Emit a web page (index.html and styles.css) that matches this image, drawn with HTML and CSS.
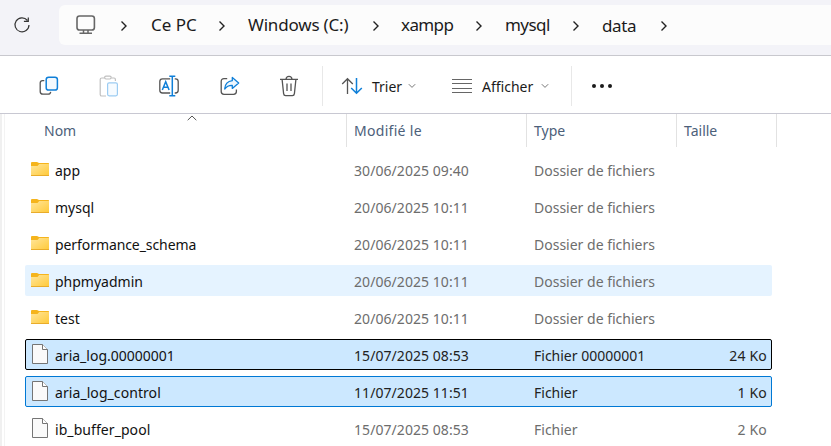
FILE: index.html
```html
<!DOCTYPE html>
<html lang="fr">
<head>
<meta charset="utf-8">
<title>data</title>
<link rel="stylesheet" href="styles.css">
</head>
<body>
<svg class="defs" width="0" height="0">
  <defs>
    <linearGradient id="gold" x1="0" y1="0" x2="1" y2="1"><stop offset="0" stop-color="#ffe69c"/><stop offset="1" stop-color="#ffc937"/></linearGradient>
    <symbol id="chev" viewBox="0 0 8 12"><path d="M1.5 1.5 6 6 1.5 10.5" fill="none" stroke="#222" stroke-width="1.4"/></symbol>
    <symbol id="down" viewBox="0 0 8 6"><path d="M.8 1.2 4 4.4 7.2 1.2" fill="none" stroke="#777" stroke-width="1"/></symbol>
    <symbol id="folder" viewBox="0 0 18 14"><path d="M0 1Q0 0 1 0H6L8 1H17.5Q18 1 18 2V6H0Z" fill="#f5b41c"/><path d="M0 4H6.5L8.2 2H18V14H0Z" fill="url(#gold)"/><path d="M0 13.5H18" stroke="#e9ac2a"/></symbol>
    <symbol id="file" viewBox="0 0 17 20"><path d="M1.5.5H11.5L16.5 5.5V19.5H1.5Z" fill="#fafafa" stroke="#757575"/><path d="M11.5.5V5.5H16.5" fill="#fff" stroke="#757575"/></symbol>
  </defs>
</svg>
<div class="window">
  <header class="nav">
    <svg class="refresh" width="18" height="18" viewBox="0 0 18 18"><path d="M14.4 4.4A7 7 0 1 0 16 9M15.3 1.6V5.4H10.9" fill="none" stroke="#333" stroke-width="1.2"/></svg>
    <nav class="address">
      <svg class="pc" width="20" height="20" viewBox="0 0 20 20"><rect x="1" y="1" width="17.4" height="14" rx="2.6" fill="none" stroke="#666" stroke-width="1.6"/><path d="M7.5 15V18M12 15V18M3.5 18.3H16" fill="none" stroke="#666" stroke-width="1.5"/></svg>
      <svg class="chev"><use href="#chev"/></svg><span class="cepc">Ce PC</span>
      <svg class="chev"><use href="#chev"/></svg><span class="drive">Windows (C:)</span>
      <svg class="chev"><use href="#chev"/></svg><span class="xampp">xampp</span>
      <svg class="chev"><use href="#chev"/></svg><span class="mysql">mysql</span>
      <svg class="chev"><use href="#chev"/></svg><span class="data">data</span>
      <svg class="chev"><use href="#chev"/></svg>
    </nav>
  </header>
  <div class="toolbar">
    <div class="tools">
      <svg width="20" height="20" viewBox="0 0 20 20" fill="none" stroke-width="1.3"><path d="M5.3 4.6H3.5Q1.2 4.6 1.2 7V15.5Q1.2 18.2 4 18.2H9Q11.3 18.2 11.7 15.8" stroke="#555"/><rect x="7.2" y="1.2" width="11.2" height="12.9" rx="2.4" fill="#f3f9fe" stroke="#0f7fd8" stroke-width="1.5"/></svg>
      <svg width="20" height="22" viewBox="0 0 20 22" fill="none" stroke-width="1.2"><path d="M5.5 3H2.8Q1.2 3 1.2 4.6V19.4Q1.2 21 2.8 21H7M12.5 3H15Q16.4 3 16.4 4.6V6" stroke="#c0c0c0"/><rect x="5.6" y="1.2" width="6.6" height="2.8" rx="1.4" stroke="#c0c0c0"/><rect x="8.6" y="7.8" width="9.8" height="13" rx="1.5" fill="#f6fbff" stroke="#9cccf2"/></svg>
      <svg width="22" height="22" viewBox="0 0 22 22" fill="none" stroke-width="1.3"><path d="M12.2 3.8H4.5Q1.8 3.8 1.8 6.5V15.3Q1.8 18 4.5 18H12.2M16.7 3.8H17.5Q20.2 3.8 20.2 6.5V15.3Q20.2 18 17.5 18H16.7" stroke="#555"/><path d="M4.3 15 7.7 6.7 11.1 15M5.5 12.2H9.9M14.3 1.5V20.5M11.3 1.2H17.3M11.3 20.8H17.3" stroke="#0f7fd8" stroke-width="1.5"/></svg>
      <svg width="20" height="20" viewBox="0 0 20 20" fill="none" stroke-width="1.3"><path d="M7.2 2.7H4Q1.2 2.7 1.2 5.5V15.5Q1.2 18.3 4 18.3H13.5Q16.4 18.3 16.4 15.5V13.5" stroke="#555"/><path d="M12.3 1.5 18.7 7 12.3 12.4V9.4Q7.5 9.2 4.7 13 5.2 5.5 12.3 4.7Z" fill="#eef7fe" stroke="#0f7fd8" stroke-linejoin="round"/></svg>
      <svg width="20" height="22" viewBox="0 0 20 22" fill="none" stroke="#555" stroke-width="1.3"><path d="M1 4.3H19M7 4.2Q7.2 1.3 10 1.3T13 4.2M3.1 4.5 4.6 18.6Q4.8 20.6 6.6 20.6H13.4Q15.2 20.6 15.4 18.6L16.9 4.5M8 8.5V16M12 8.5V16"/></svg>
    </div>
    <div class="menus">
      <svg width="22" height="18" viewBox="0 0 22 18" fill="none" stroke-width="1.3"><path d="M6.5 17V1.5M1.2 7 6.5 1.7 11.8 7" stroke="#555"/><path d="M15.5 1V16.5M10.2 11 15.5 16.3 20.8 11" stroke="#0f7fd8" stroke-width="1.5"/></svg>
      <span class="trier">Trier</span><svg class="down"><use href="#down"/></svg>
      <svg class="lines" width="20" height="14" viewBox="0 0 20 14" stroke="#666"><path d="M0 .5H20M0 4.5H20M0 9.5H20M0 13.5H20"/></svg>
      <span class="afficher">Afficher</span><svg class="down"><use href="#down"/></svg>
    </div>
    <svg class="more" width="20" height="4" viewBox="0 0 20 4" fill="#1b1b1b"><circle cx="2" cy="2" r="2"/><circle cx="10" cy="2" r="2"/><circle cx="18" cy="2" r="2"/></svg>
  </div>
  <main class="pane">
    <div class="head">
      <div class="nom">Nom<svg class="sort" width="10" height="6" viewBox="0 0 10 6"><path d="M.7 5.2 5 1 9.3 5.2" fill="none" stroke="#555"/></svg></div>
      <div class="mod">Modifié le</div><div>Type</div><div class="taille">Taille</div>
    </div>
    <div class="rows">
      <div class="row"><svg class="folder"><use href="#folder"/></svg><span class="name">app</span><span class="date">30/06/2025 09:40</span><span>Dossier de fichiers</span></div>
      <div class="row"><svg class="folder"><use href="#folder"/></svg><span class="name">mysql</span><span class="date">20/06/2025 10:11</span><span>Dossier de fichiers</span></div>
      <div class="row"><svg class="folder"><use href="#folder"/></svg><span class="name schema">performance_schema</span><span class="date">20/06/2025 10:11</span><span>Dossier de fichiers</span></div>
      <div class="row hover"><svg class="folder"><use href="#folder"/></svg><span class="name">phpmyadmin</span><span class="date">20/06/2025 10:11</span><span>Dossier de fichiers</span></div>
      <div class="row"><svg class="folder"><use href="#folder"/></svg><span class="name">test</span><span class="date">20/06/2025 10:11</span><span>Dossier de fichiers</span></div>
      <div class="row selected focus"><svg class="file"><use href="#file"/></svg><span class="name">aria_log.00000001</span><span class="date">15/07/2025 08:53</span><span>Fichier 00000001</span><span class="size">24 Ko</span></div>
      <div class="row selected"><svg class="file"><use href="#file"/></svg><span class="name file-name">aria_log_control</span><span class="date">11/07/2025 11:51</span><span>Fichier</span><span class="size">1 Ko</span></div>
      <div class="row"><svg class="file"><use href="#file"/></svg><span class="name file-name">ib_buffer_pool</span><span class="date">15/07/2025 08:53</span><span>Fichier</span><span class="size">2 Ko</span></div>
    </div>
  </main>
</div>
</body>
</html>
```
FILE: styles.css
```css
* { box-sizing: border-box; }
body { margin: 0; background: #fff; font: 14px/20px "Noto Sans", "Open Sans", sans-serif; color: #1b1b1b; }
svg { display: block; flex: none; }
.defs { position: absolute; }
.window { width: 831px; height: 446px; overflow: hidden; display: flex; flex-direction: column; }
.nav { height: 56px; flex: none; background: #f3f3f8; border-bottom: 1px solid #c8c8ce; display: flex; padding-top: 5px; }
.refresh { margin: 11px 0 0 12.5px; }
.address { margin-left: 28.5px; flex: 1; height: 40px; background: #fcfcfc; border-radius: 6px 0 0 6px; display: grid; grid-template-columns: 44px 31px 67px 30px 124px 29px 74px 30px 67px 30px 58px 8px; padding-left: 17px; align-items: center; font-size: 17px; white-space: nowrap; }
.drive { letter-spacing: -.18px; }
.xampp { letter-spacing: -.6px; }
.mysql { letter-spacing: -.55px; }
.data { letter-spacing: -.4px; padding-top: 1px; }
.pc { margin-top: -1px; }
.chev { width: 8px; height: 12px; margin-top: 1px; }
.toolbar { height: 58px; flex: none; border-bottom: 1px solid #c8c8d2; display: flex; align-items: center; }
.tools { display: flex; align-items: center; width: 323px; height: 40px; padding: 0 23px 0 39px; justify-content: space-between; border-right: 1px solid #e8e8e8; margin-top: 2px; }
.menus { display: flex; align-items: center; width: 249px; height: 40px; padding-left: 18px; border-right: 1px solid #e8e8e8; margin-top: 2px; }
.trier { width: 36px; margin-left: 9px; padding-top: 2px; }
.afficher { width: 59px; margin-left: 10px; padding-top: 2px; }
.down { width: 8px; height: 6px; }
.lines { margin-left: 36px; }
.more { margin: 3px 0 0 20px; }
.pane { flex: 1; border-left: 2px solid #f0f0f0; padding-left: 2px; }
.pane::before { content: ""; float: left; width: 1px; height: 332px; background: #f3f3f3; }
.head { height: 32px; margin-left: 21px; display: grid; grid-template-columns: 322px 180px 150px 100px; color: #4c607a; line-height: 33px; }
.head > div { border-right: 1px solid #e2e2e2; padding-left: 7px; }
.head .nom { padding-left: 19px; position: relative; }
.head .mod { letter-spacing: .3px; }
.sort { position: absolute; left: 162px; top: 1px; }
.rows { margin-left: 21px; padding-top: 8px; display: grid; gap: 6px; }
.row { width: 747px; height: 31px; border: 1px solid transparent; border-radius: 2px; display: grid; grid-template-columns: 24px 299px 180px 140px 1fr; align-items: center; padding: 2px 4px 0 5px; color: #6d6d6d; white-space: nowrap; }
.name { color: #111; }
.schema { letter-spacing: -.08px; }
.file-name { letter-spacing: .07px; }
.date { letter-spacing: .06px; }
.folder { width: 18px; height: 14px; margin-top: -3px; }
.file { width: 17px; height: 20px; margin-top: -3px; }
.size { text-align: right; letter-spacing: .2px; }
.hover { background: #e5f3ff; }
.selected { background: #cce8ff; border-color: #0078d4; color: #222; }
.focus { border-color: #000; }
```
